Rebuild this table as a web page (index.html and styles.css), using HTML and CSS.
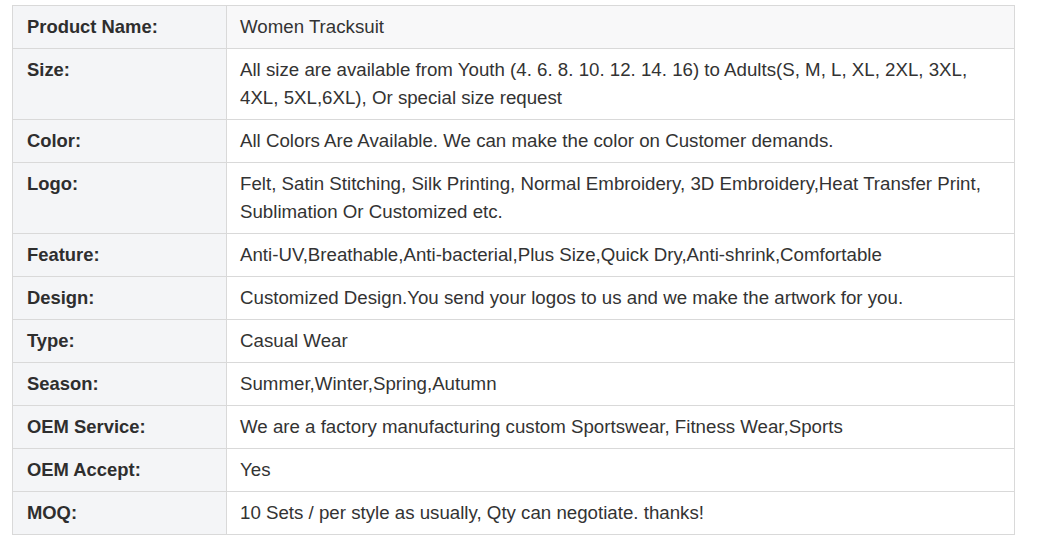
FILE: index.html
```html
<!DOCTYPE html>
<html>
<head>
<meta charset="utf-8">
<link rel="stylesheet" href="styles.css">
</head>
<body>
<table class="spec">
  <tr class="head"><th>Product Name:</th><td>Women Tracksuit</td></tr>
  <tr><th>Size:</th><td>All size are available from Youth (4. 6. 8. 10. 12. 14. 16) to Adults(S, M, L, XL, 2XL, 3XL, 4XL, 5XL,6XL), Or special size request</td></tr>
  <tr><th>Color:</th><td>All Colors Are Available. We can make the color on Customer demands.</td></tr>
  <tr><th>Logo:</th><td>Felt, Satin Stitching, Silk Printing, Normal Embroidery, 3D Embroidery,Heat Transfer Print, Sublimation Or Customized etc.</td></tr>
  <tr><th>Feature:</th><td>Anti-UV,Breathable,Anti-bacterial,Plus Size,Quick Dry,Anti-shrink,Comfortable</td></tr>
  <tr><th>Design:</th><td>Customized Design.You send your logos to us and we make the artwork for you.</td></tr>
  <tr><th>Type:</th><td>Casual Wear</td></tr>
  <tr><th>Season:</th><td>Summer,Winter,Spring,Autumn</td></tr>
  <tr><th>OEM Service:</th><td>We are a factory manufacturing custom Sportswear, Fitness Wear,Sports</td></tr>
  <tr><th>OEM Accept:</th><td>Yes</td></tr>
  <tr><th>MOQ:</th><td>10 Sets / per style as usually, Qty can negotiate. thanks!</td></tr>
</table>
</body>
</html>
```
FILE: styles.css
```css
html, body {
  margin: 0;
  background: #ffffff;
}
body {
  padding: 5px 0 0 12px;
  font-family: "Liberation Sans", Arial, sans-serif;
  font-size: 18.7px;
  color: #333333;
}
.spec {
  border-collapse: collapse;
  width: 1003px;
  table-layout: fixed;
}
.spec th, .spec td {
  border: 1px solid #d9d9d9;
  padding: 7px 13px 7px 13px;
  line-height: 28px;
  text-align: left;
  vertical-align: top;
}
.spec th {
  width: 186px;
  padding-left: 14px;
  padding-right: 13px;
  font-weight: bold;
  font-size: 18.4px;
  background: #f4f5f7;
  color: #2e2e2e;
}
.spec td {
  font-weight: normal;
  background: #ffffff;
}
.spec .head td {
  background: #f8f8f9;
}
```
